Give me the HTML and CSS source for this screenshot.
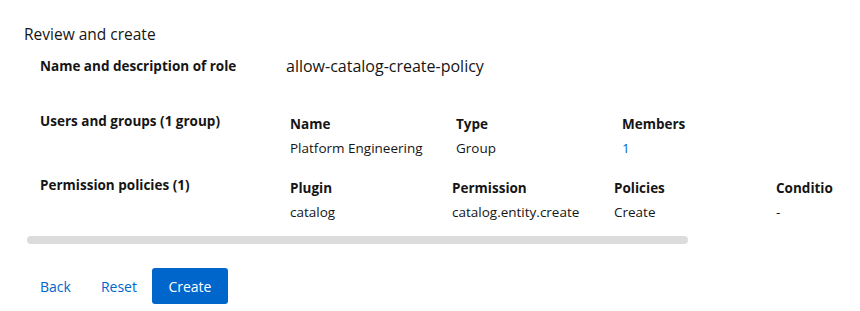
FILE: index.html
```html
<!DOCTYPE html>
<html lang="en">

<head>
    <meta charset="UTF-8">
    <meta name="viewport" content="width=device-width, initial-scale=1.0">
    <title>Review and create</title>
    <link rel="stylesheet" href="styles.css">
</head>

<body>

    <div class="page">
        <h2 class="title">Review and create</h2>

        <div class="review">
            <div class="row row-name">
                <div class="label">Name and description of role</div>
                <div class="value">allow-catalog-create-policy</div>
            </div>

            <div class="row row-users">
                <div class="label">Users and groups (1 group)</div>
                <table class="mini-table users-table">
                    <tr>
                        <th>Name</th>
                        <th>Type</th>
                        <th>Members</th>
                    </tr>
                    <tr>
                        <td>Platform Engineering</td>
                        <td>Group</td>
                        <td class="link">1</td>
                    </tr>
                </table>
            </div>

            <div class="row row-policies">
                <div class="label">Permission policies (1)</div>
                <table class="mini-table policies-table">
                    <tr>
                        <th>Plugin</th>
                        <th>Permission</th>
                        <th>Policies</th>
                        <th>Conditions</th>
                    </tr>
                    <tr>
                        <td>catalog</td>
                        <td>catalog.entity.create</td>
                        <td>Create</td>
                        <td>-</td>
                    </tr>
                </table>
            </div>
        </div>

        <div class="scrollbar">
            <div class="scroll-thumb"></div>
        </div>

        <div class="actions">
            <button type="button" class="btn-link">Back</button>
            <button type="button" class="btn-link">Reset</button>
            <button type="button" class="btn-primary">Create</button>
        </div>

        <div class="cancel-row">
            <button type="button" class="btn-link">Cancel</button>
        </div>
    </div>

</body>

</html>
```

FILE: styles.css
```css
body {
    font-family: 'Open Sans', 'Noto Sans', sans-serif;
    color: #151515;
    margin: 0;
    overflow: hidden;
}

.page {
    width: 809px;
    padding-left: 24px;
    overflow: hidden;
}

.title {
    font-size: 15.5px;
    font-weight: 400;
    line-height: 24px;
    margin: 22px 0 0 0;
}

.review {
    margin-left: 16px;
}

.row {
    display: grid;
    grid-template-columns: 246px 1fr;
    align-items: start;
    justify-items: start;
}

.row-name {
    margin-top: 11px;
    height: 55px;
}

.row-users {
    height: 64px;
}

.label {
    font-size: 13.5px;
    font-weight: 700;
    line-height: 18px;
}

.value {
    font-size: 16px;
    line-height: 18px;
}

.mini-table {
    border-collapse: collapse;
    table-layout: fixed;
    margin: 2px 0 0 4px;
    font-size: 13.5px;
}

.mini-table th {
    font-weight: 700;
    text-align: left;
    line-height: 20px;
    padding: 0;
    white-space: nowrap;
    overflow: hidden;
}

.mini-table td {
    line-height: 20px;
    padding: 4px 0 0 0;
    white-space: nowrap;
}

.users-table {
    width: 498px;
}

.users-table th,
.users-table td {
    width: 166px;
}

.policies-table {
    width: 648px;
}

.policies-table th,
.policies-table td {
    width: 162px;
}

.link {
    color: #0066cc;
}

.scrollbar {
    margin: 14px 0 0 3px;
    height: 8px;
}

.scroll-thumb {
    width: 661px;
    height: 8px;
    border-radius: 4px;
    background: #dcdcdc;
}

.actions {
    display: flex;
    align-items: center;
    margin: 24px 0 0 1px;
}

.btn-link,
.btn-primary {
    font-family: inherit;
    font-size: 14px;
    font-weight: 500;
    border: none;
    background: none;
    cursor: pointer;
}

.btn-link {
    color: #0066cc;
    padding: 0 15px;
    height: 36px;
}

.btn-primary {
    background: #0066cc;
    color: #fff;
    border-radius: 3px;
    height: 36px;
    width: 76px;
    padding: 0;
}

.cancel-row {
    display: flex;
    justify-content: flex-end;
    margin-top: -6px;
}

.cancel-row .btn-link {
    padding: 0;
    width: 58px;
}
```
